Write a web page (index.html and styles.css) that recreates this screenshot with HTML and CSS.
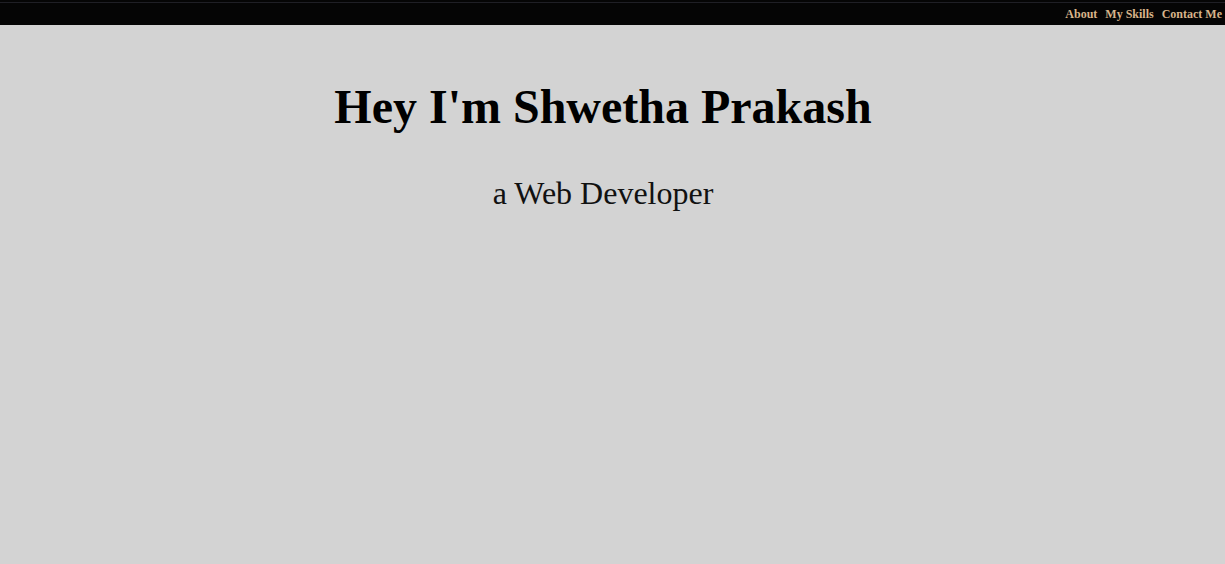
FILE: index.html
```html
<!DOCTYPE html>
<html>
<head>
<meta charset="utf-8">
<link rel="stylesheet" href="styles.css">
</head>
<body>
<nav class="topbar">
  <a class="navlink" href="#about">About</a>
  <a class="navlink" href="#skills">My Skills</a>
  <a class="navlink" href="#contact">Contact Me</a>
</nav>
<header class="hero">
  <h1 class="hero-title">Hey I'm Shwetha Prakash</h1>
  <p class="hero-sub">a Web Developer</p>
</header>
</body>
</html>
```

FILE: styles.css
```css
html, body {
  margin: 0;
  padding: 0;
  background: #d3d3d3;
  font-family: "Liberation Serif", "Times New Roman", serif;
  height: 100%;
}
.topbar {
  background: #050505;
  border-top: 2px solid #050505;
  height: 22px;
  box-shadow: inset 0 1px 0 #1f1f25;
  display: flex;
  justify-content: flex-end;
  align-items: center;
  gap: 8px;
  padding-right: 3px;
  padding-top: 1px;
  box-sizing: content-box;
}
.navlink {
  color: #d8b48a;
  font-weight: bold;
  font-size: 12px;
  text-decoration: none;
}
.hero {
  text-align: center;
  padding-right: 19px;
}
.hero-title {
  font-size: 48px;
  font-weight: bold;
  margin: 54px 0 0;
  line-height: 56px;
  color: #000;
}
.hero-sub {
  font-size: 32px;
  margin: 38px 0 0;
  line-height: 40px;
  color: #111;
}
```
